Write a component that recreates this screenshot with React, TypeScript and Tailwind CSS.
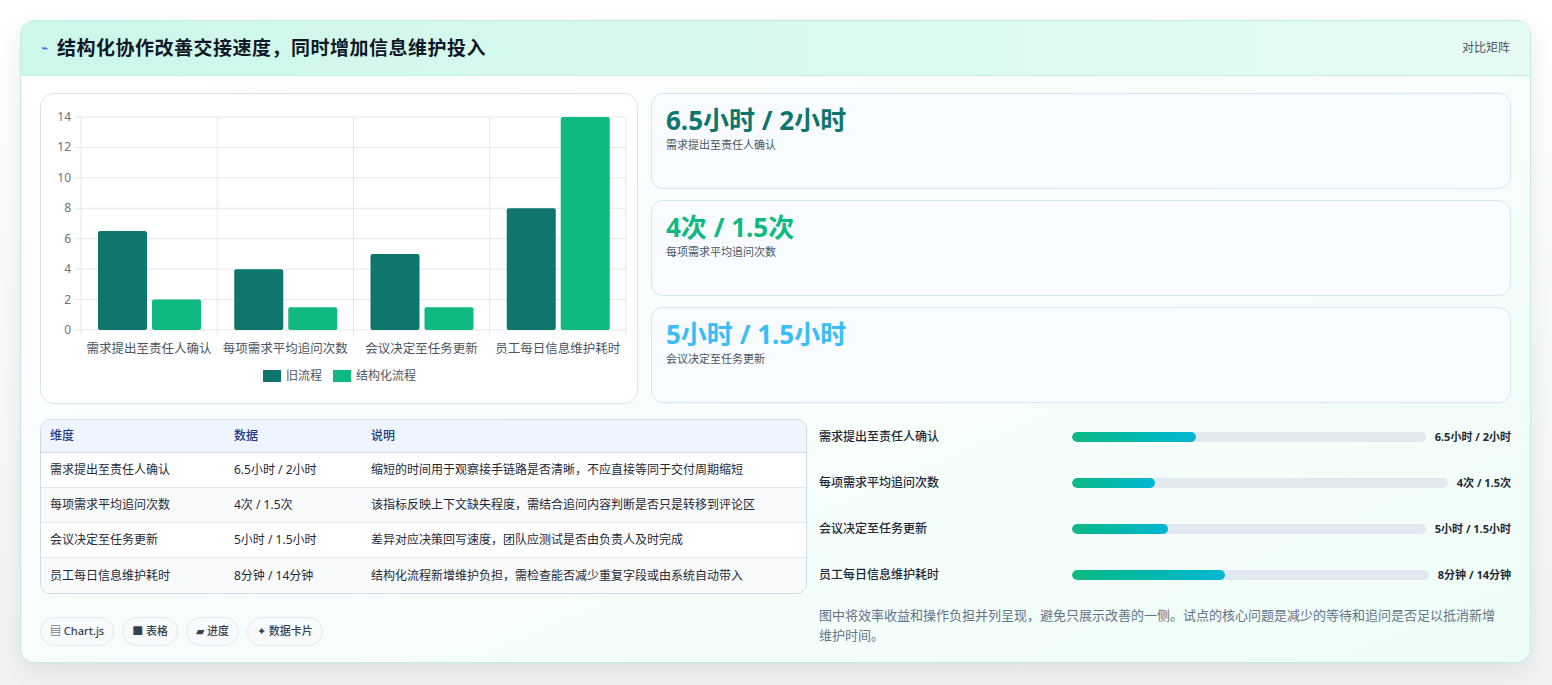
import React from 'react';

const font = { fontFamily: '"Noto Sans","Noto Sans CJK SC",sans-serif' };

const cats = ['需求提出至责任人确认', '每项需求平均追问次数', '会议决定至任务更新', '员工每日信息维护耗时'];
const oldV = [6.5, 4, 5, 8];
const newV = [2, 1.5, 1.5, 14];

function Chart() {
  const x0 = 40, x1 = 585, y0 = 236, yTop = 23;
  const sy = (v: number) => y0 - (v / 14) * (y0 - yTop);
  const cw = (x1 - x0) / 4;
  return (
    <svg width="597" height="310" className="block">
      {[0, 2, 4, 6, 8, 10, 12, 14].map((t) => (
        <g key={t}>
          <line x1={x0 - 6} x2={x1} y1={sy(t)} y2={sy(t)} stroke="#e5e7eb" />
          <text x={x0 - 10} y={sy(t) + 4} fontSize="12" fill="#6b7280" textAnchor="end">{t}</text>
        </g>
      ))}
      {[0, 1, 2, 3, 4].map((i) => (
        <line key={i} x1={x0 + i * cw} x2={x0 + i * cw} y1={yTop} y2={y0 + 5} stroke="#e5e7eb" />
      ))}
      {cats.map((c, i) => (
        <g key={c}>
          <rect x={x0 + i * cw + 17} y={sy(oldV[i])} width="49" height={y0 - sy(oldV[i])} rx="2" fill="#0f766e" />
          <rect x={x0 + i * cw + 71} y={sy(newV[i])} width="49" height={y0 - sy(newV[i])} rx="2" fill="#10b981" />
          <text x={x0 + i * cw + cw / 2} y={y0 + 23} fontSize="12.5" fill="#4b5563" textAnchor="middle">{c}</text>
        </g>
      ))}
      <rect x="222" y="276" width="18" height="12" fill="#0f766e" />
      <text x="245" y="286" fontSize="12" fill="#4b5563">旧流程</text>
      <rect x="292" y="276" width="18" height="12" fill="#10b981" />
      <text x="315" y="286" fontSize="12" fill="#4b5563">结构化流程</text>
    </svg>
  );
}

const stats = [
  { v: '6.5小时 / 2小时', l: '需求提出至责任人确认', c: 'text-[#0f766e]' },
  { v: '4次 / 1.5次', l: '每项需求平均追问次数', c: 'text-[#10b981]' },
  { v: '5小时 / 1.5小时', l: '会议决定至任务更新', c: 'text-[#38bdf8]' },
];

const rows = [
  ['需求提出至责任人确认', '6.5小时 / 2小时', '缩短的时间用于观察接手链路是否清晰，不应直接等同于交付周期缩短'],
  ['每项需求平均追问次数', '4次 / 1.5次', '该指标反映上下文缺失程度，需结合追问内容判断是否只是转移到评论区'],
  ['会议决定至任务更新', '5小时 / 1.5小时', '差异对应决策回写速度，团队应测试是否由负责人及时完成'],
  ['员工每日信息维护耗时', '8分钟 / 14分钟', '结构化流程新增维护负担，需检查能否减少重复字段或由系统自动带入'],
];

const prog = [
  { l: '需求提出至责任人确认', v: '6.5小时 / 2小时', p: 35 },
  { l: '每项需求平均追问次数', v: '4次 / 1.5次', p: 22 },
  { l: '会议决定至任务更新', v: '5小时 / 1.5小时', p: 27 },
  { l: '员工每日信息维护耗时', v: '8分钟 / 14分钟', p: 43 },
];

export default function App() {
  return (
    <div style={font} className="w-[1552px] h-[685px] bg-gradient-to-b from-white to-[#f1f2f4] pt-[20px] pl-[20px]">
      <div className="w-[1511px] h-[643px] rounded-[14px] border border-[#bfeee0] bg-gradient-to-br from-white via-[#f8fdfc] to-[#eefdf7] shadow-[0_8px_24px_rgba(0,0,0,0.08)] overflow-hidden">
        <div className="h-[55px] flex items-center justify-between px-[20px] bg-gradient-to-r from-[#ccf7ea] to-[#e6fbf4] border-b border-[#c9efe3]">
          <div className="flex items-center gap-[9px]">
            <span className="text-[#2563eb] text-[12px]">⌁</span>
            <h1 className="text-[19px] font-bold text-[#111827] tracking-[0.5px]">结构化协作改善交接速度，同时增加信息维护投入</h1>
          </div>
          <span className="text-[12px] text-[#4b5563]">对比矩阵</span>
        </div>
        <div className="px-[19px] pt-[17px]">
          <div className="flex gap-[13px]">
            <div className="w-[598px] h-[311px] rounded-[14px] border border-[#dbe4ea] bg-white">
              <Chart />
            </div>
            <div className="flex-1 flex flex-col gap-[11px]">
              {stats.map((s) => (
                <div key={s.l} className="h-[96px] rounded-[12px] border border-[#d6e6ef] bg-[#f8fbff] px-[14px] pt-[9px]">
                  <div className={`text-[26px] font-bold leading-[34px] ${s.c}`}>{s.v}</div>
                  <div className="text-[11px] text-[#4b5563]">{s.l}</div>
                </div>
              ))}
            </div>
          </div>
          <div className="flex gap-[12px] mt-[15px]">
            <div className="w-[767px]">
              <div className="rounded-[10px] border border-[#cfdbe8] overflow-hidden text-[12px] text-[#1f2937]">
                <div className="flex h-[33px] items-center bg-[#eef5ff] border-b border-[#cfdbe8] text-[#1e3a8a] font-medium">
                  <div className="w-[193px] pl-[9px]">维度</div>
                  <div className="w-[137px]">数据</div>
                  <div>说明</div>
                </div>
                {rows.map((r, i) => (
                  <div key={r[0]} className={`flex h-[35px] items-center ${i % 2 ? 'bg-[#f8fafc]' : 'bg-white'} ${i < 3 ? 'border-b border-[#e2e8f0]' : ''}`}>
                    <div className="w-[193px] pl-[9px]">{r[0]}</div>
                    <div className="w-[137px]">{r[1]}</div>
                    <div>{r[2]}</div>
                  </div>
                ))}
              </div>
              <div className="flex gap-[8px] mt-[23px] text-[11px] text-[#374151]">
                {['▤ Chart.js', '■ 表格', '▰ 进度', '✦ 数据卡片'].map((t) => (
                  <span key={t} className="h-[29px] px-[9px] flex items-center rounded-full border border-[#e2e8f0] bg-[#f8fafc] font-medium">{t}</span>
                ))}
              </div>
            </div>
            <div className="flex-1">
              <div className="flex flex-col gap-[30px] pt-[10px]">
                {prog.map((p) => (
                  <div key={p.l} className="flex items-center h-[16px] text-[12px] text-[#1f2937]">
                    <div className="w-[253px] font-medium">{p.l}</div>
                    <div className="flex-1 h-[10px] rounded-full bg-[#e2e8f0] overflow-hidden">
                      <div className="h-full rounded-full bg-gradient-to-r from-[#10b981] to-[#06b6d4]" style={{ width: `${p.p}%` }} />
                    </div>
                    <div className="pl-[9px] font-bold text-[11px] whitespace-nowrap">{p.v}</div>
                  </div>
                ))}
              </div>
              <p className="mt-[22px] pr-[4px] text-[13px] leading-[20px] text-[#64748b]">图中将效率收益和操作负担并列呈现，避免只展示改善的一侧。试点的核心问题是减少的等待和追问是否足以抵消新增维护时间。</p>
            </div>
          </div>
        </div>
      </div>
    </div>
  );
}
